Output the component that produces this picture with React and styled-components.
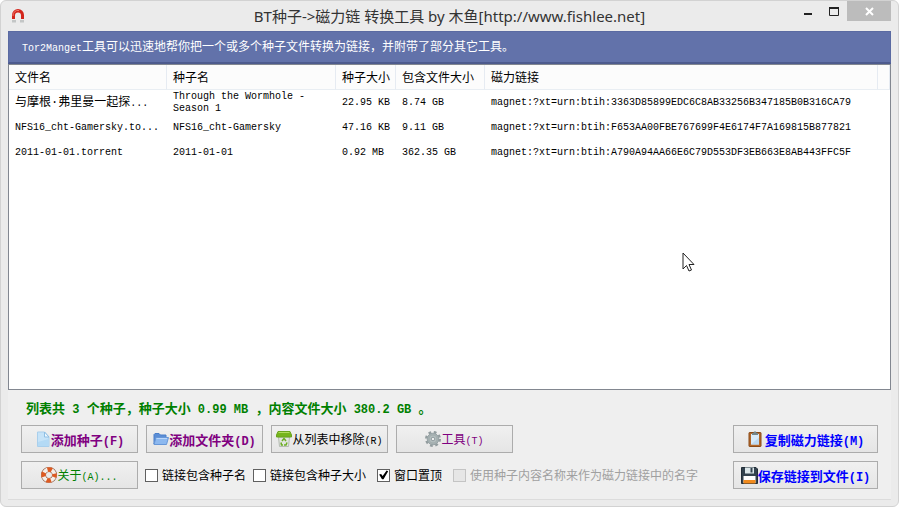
import styled, { createGlobalStyle, css } from 'styled-components';

const GlobalStyle = createGlobalStyle`
  *, *::before, *::after {
    box-sizing: border-box;
  }

  body {
    margin: 0;
    background: #fff;
    font-family: 'Liberation Mono', 'Noto Sans CJK SC', monospace;
    font-size: 12px;
    line-height: 12px;
    color: #000;
  }
`;

const Window = styled.div`
  position: relative;
  display: flex;
  flex-direction: column;
  min-height: 100vh;
  padding: 0 7px 6px;
  border: 1px solid #d2d2d2;
  border-radius: 6px;
  background: #ebebeb;
`;

const TitleBar = styled.header`
  display: grid;
  grid-template-columns: 1fr auto 1fr;
  height: 30px;
`;

const TitleIcon = styled.div`
  padding: 7px 3px;
`;

const Title = styled.h1`
  margin: 0;
  font: 400 15px/30px 'Noto Sans', 'Noto Sans CJK SC', sans-serif;
  color: #333;
  white-space: nowrap;
`;

const WindowControls = styled.div`
  display: flex;
  justify-content: flex-end;
  align-items: flex-start;
`;

const ControlButton = styled.button`
  display: block;
  width: ${({ $close }) => ($close ? 44 : 26)}px;
  height: 20px;
  padding: 0;
  border: 0;
  background: ${({ $close }) => ($close ? '#bcbcbc' : 'transparent')};

  svg {
    display: block;
    margin: 0 auto;
  }
`;

const Client = styled.main`
  flex: 1;
  display: flex;
  flex-direction: column;
  border-bottom: 1px solid #dcdcdc;
  background: #efefef;
`;

const Banner = styled.p`
  margin: 0;
  padding: 0 13px;
  height: 33px;
  border: 1px solid #5a6aa2;
  border-bottom: 2px solid #4d5b8e;
  background: #6272aa;
  color: #fff;
  line-height: 32px;
`;

const Latin = styled.span`
  font-size: ${({ $size = 10 }) => $size}px;
  white-space: pre;
`;

const ListView = styled.div`
  position: relative;
  flex: 1;
  min-height: 160px;
  border: 1px solid #828790;
  background: #fff;
`;

const Table = styled.table`
  width: 100%;
  table-layout: fixed;
  border-collapse: separate;
  border-spacing: 0;
`;

const HeadCell = styled.th`
  width: ${({ $width }) => ($width ? `${$width}px` : 'auto')};
  height: 25px;
  padding: 4px 0 0 6px;
  border-right: 1px solid #e6ebf2;
  border-bottom: 1px solid #e9eef3;
  background: #fcfcfc;
  font-weight: 400;
  text-align: left;
  white-space: nowrap;
`;

const Cell = styled.td`
  height: 25px;
  padding: ${({ $cjk }) => ($cjk ? 2 : 0)}px 0 0 6px;
  white-space: nowrap;
  overflow: hidden;
  font-size: ${({ $cjk }) => ($cjk ? 12 : 10)}px;
  ${({ $wrap }) =>
    $wrap &&
    css`
      padding-right: 20px;
      white-space: normal;
    `}
`;

const Pointer = styled.svg`
  position: absolute;
  left: 673px;
  top: 187px;
`;

const Footer = styled.footer`
  padding: 12px 13px 10px;
`;

const Summary = styled.p`
  margin: 0 0 7px 5px;
  font-size: 13px;
  font-weight: 700;
  line-height: 15px;
  color: #008000;
`;

const Row = styled.div`
  display: flex;
  align-items: center;
  gap: ${({ $gap }) => $gap}px;

  & + & {
    margin-top: 8px;
  }
`;

const Button = styled.button`
  display: flex;
  align-items: center;
  justify-content: center;
  flex: none;
  gap: ${({ $gap = 0 }) => $gap}px;
  width: ${({ $wide }) => ($wide ? 145 : 117)}px;
  height: 28px;
  padding: 0;
  border: 1px solid #acacac;
  background: linear-gradient(#f0f0f0, #e5e5e5);
  color: ${({ $color }) => $color};
  font-family: inherit;
  font-size: ${({ $bold }) => ($bold ? 13 : 12)}px;
  font-weight: ${({ $bold }) => ($bold ? 700 : 400)};
  white-space: nowrap;

  svg {
    flex: none;
  }

  &:last-child {
    margin-left: ${({ $wide }) => ($wide ? 'auto' : 0)};
  }
`;

const Option = styled.label`
  display: flex;
  align-items: center;
  gap: 4px;
  white-space: nowrap;
  color: ${({ $disabled }) => ($disabled ? '#a0a0a0' : '#000')};
  margin-left: ${({ $spaced }) => ($spaced ? 4 : 0)}px;
`;

const OptionText = styled.span`
  padding-top: 4px;
`;

const Check = styled.input`
  appearance: none;
  width: 13px;
  height: 13px;
  margin: 0;
  border: 1px solid #606060;
  background: #fff;

  &:checked::after {
    content: '';
    display: block;
    width: 11px;
    height: 11px;
    background: #000;
    clip-path: polygon(10% 45%, 28% 40%, 42% 60%, 78% 10%, 92% 16%, 50% 88%, 36% 88%);
  }

  &:disabled {
    border-color: #c4c4c4;
    background: #e6e6e6;
  }
`;

const MagnetIcon = () => (
  <svg width="14" height="18" viewBox="0 0 14 18">
    <path d="M1 11V7a6 6 0 0 1 12 0v4H10V7.500a3 3 0 0 0-6 0V11z" fill="#d3261c" />
    <path d="M2 8a5 5 0 0 1 6-5.500" stroke="#f0766c" fill="none" />
    <path d="M1 12h4v2.500H1zM9 12h4v2.500H9z" fill="#c3c6c6" />
  </svg>
);

const FileIcon = () => (
  <svg width="16" height="16" viewBox="0 0 16 16">
    <path d="M2.500 1h7l4.500 5v9.500H2.500z" fill="#c6e3f8" stroke="#a9cfec" />
    <path d="M9.500 1v5H14z" fill="#eef8ff" stroke="#8fbfe4" />
    <path d="M3 11l10.500-3v7H3z" fill="#b4daf5" />
  </svg>
);

const FolderIcon = () => (
  <svg width="16" height="16" viewBox="0 0 16 16">
    <path d="M1 13V3.500L2 2.500h4l1.500 1.500H13v3H4z" fill="#5b8ed6" stroke="#4a7fc9" />
    <path d="M1 13.500L3 6.500h12.500l-2 7z" fill="#8cb8ef" stroke="#6797d8" />
    <path d="M3.500 7.500H14" stroke="#b9d6fa" />
  </svg>
);

const TrashIcon = () => (
  <svg width="16" height="16" viewBox="0 0 16 16">
    <path d="M2.500 6h11l-1 9.500h-9z" fill="#e2e5e0" stroke="#b4bbb1" />
    <path d="M2 0.500h12l1.500 3.500v2H0.500V4z" fill="#76b51b" stroke="#6aa31f" />
    <path d="M2.500 1.500h11" stroke="#b2dd5e" />
    <path d="M6 10l2-2.500 2 2.500M11 11.500l-1 2.500H8M7 14H5.500L5 11.500" fill="none" stroke="#6cae24" strokeWidth="1.500" />
  </svg>
);

const GearIcon = () => (
  <svg width="16" height="16" viewBox="0 0 16 16">
    <circle cx="8" cy="8" r="6.500" fill="none" stroke="#929c9e" strokeWidth="3" strokeDasharray="2.600 2.505" />
    <circle cx="8" cy="8" r="5.800" fill="#a5b0b1" stroke="#97a3a6" />
    <circle cx="8" cy="8" r="3.200" fill="#b6c0c1" />
    <circle cx="8" cy="8" r="1.800" fill="#eceeee" stroke="#8f9b9e" />
  </svg>
);

const LifebuoyIcon = () => (
  <svg width="16" height="16" viewBox="0 0 16 16">
    <circle cx="8" cy="8" r="5.500" fill="none" stroke="#8f5a40" strokeWidth="5" />
    <circle cx="8" cy="8" r="5.500" fill="none" stroke="#f4efea" strokeWidth="3.800" />
    <circle
      cx="8"
      cy="8"
      r="5.500"
      fill="none"
      stroke="#dd5a22"
      strokeWidth="4.600"
      strokeDasharray="4.400 4.239"
      strokeDashoffset="2.200"
    />
  </svg>
);

const ClipboardIcon = () => (
  <svg width="16" height="16" viewBox="0 0 16 16">
    <rect x="2" y="1.500" width="12" height="14" rx="0.500" fill="#b4692a" stroke="#8a4a18" />
    <rect x="4" y="3" width="8" height="10.500" fill="#d8ebfa" />
    <path d="M5 4V2h1.500L7 0.500h2L9.500 2H11v2z" fill="#75868a" />
    <path d="M4 13.500l8-7v7z" fill="#bddaf2" />
  </svg>
);

const FloppyIcon = () => (
  <svg width="17" height="17" viewBox="0 0 17 17">
    <path d="M0.500 0.500H15L16.500 2v14.500h-16z" fill="#33424e" stroke="#222e38" />
    <rect x="4" y="0.500" width="9" height="6" fill="#dce7ea" />
    <rect x="9.500" y="1" width="2" height="4.500" fill="#33424e" />
    <rect x="2.500" y="9" width="12" height="7" fill="#fff" />
    <rect x="2.500" y="13" width="12" height="3.500" fill="#f18a1c" />
  </svg>
);

const torrents = [
  {
    file: '与摩根·弗里曼一起探',
    tail: '...',
    name: 'Through the Wormhole - Season 1',
    size: '22.95 KB',
    total: '8.74 GB',
    hash: '3363D85899EDC6C8AB33256B347185B0B316CA79',
  },
  {
    file: 'NFS16_cht-Gamersky.to...',
    name: 'NFS16_cht-Gamersky',
    size: '47.16 KB',
    total: '9.11 GB',
    hash: 'F653AA00FBE767699F4E6174F7A169815B877821',
  },
  {
    file: '2011-01-01.torrent',
    name: '2011-01-01',
    size: '0.92 MB',
    total: '362.35 GB',
    hash: 'A790A94AA66E6C79D553DF3EB663E8AB443FFC5F',
  },
];

const App = () => {
  return (
    <>
      <GlobalStyle />
      <Window>
        <TitleBar>
          <TitleIcon>
            <MagnetIcon />
          </TitleIcon>
          <Title>BT种子-&gt;磁力链 转换工具 by 木鱼[http://www.fishlee.net]</Title>
          <WindowControls>
            <ControlButton aria-label="最小化">
              <svg width="9" height="20">
                <path d="M0 13h8" stroke="#222" strokeWidth="2" />
              </svg>
            </ControlButton>
            <ControlButton aria-label="最大化">
              <svg width="11" height="20">
                <path d="M0.500 7v7.500h9V7M0 7h10" fill="none" stroke="#222" />
                <path d="M0 7h10" stroke="#222" strokeWidth="2" />
              </svg>
            </ControlButton>
            <ControlButton $close aria-label="关闭">
              <svg width="9" height="20">
                <path d="M1 7l7 7M8 7l-7 7" stroke="#fff" strokeWidth="2" />
              </svg>
            </ControlButton>
          </WindowControls>
        </TitleBar>

        <Client>
          <Banner>
            <Latin>Tor2Manget</Latin>
            工具可以迅速地帮你把一个或多个种子文件转换为链接，并附带了部分其它工具。
          </Banner>

          <ListView>
            <Table>
              <thead>
                <tr>
                  <HeadCell $width={158}>文件名</HeadCell>
                  <HeadCell $width={169}>种子名</HeadCell>
                  <HeadCell $width={60}>种子大小</HeadCell>
                  <HeadCell $width={89}>包含文件大小</HeadCell>
                  <HeadCell>磁力链接</HeadCell>
                  <HeadCell as="td" $width={12} />
                </tr>
              </thead>
              <tbody>
                {torrents.map(({ file, tail, name, size, total, hash }) => (
                  <tr key={hash}>
                    <Cell $cjk={!!tail}>
                      {file}
                      {tail && <Latin>{tail}</Latin>}
                    </Cell>
                    <Cell $wrap>{name}</Cell>
                    <Cell>{size}</Cell>
                    <Cell>{total}</Cell>
                    <Cell>magnet:?xt=urn:btih:{hash}</Cell>
                  </tr>
                ))}
              </tbody>
            </Table>
            <Pointer width="13" height="20" viewBox="0 0 13 20">
              <path d="M1 1v16l3.500-3.500L7 19l2.500-1-2.500-5.500H12z" fill="#fff" stroke="#222" />
            </Pointer>
          </ListView>

          <Footer>
            <Summary>
              列表共<Latin $size={12}> 3 </Latin>个种子，种子大小<Latin $size={12}> 0.99 MB </Latin>
              ，内容文件大小<Latin $size={12}> 380.2 GB </Latin>。
            </Summary>
            <Row $gap={8}>
              <Button $bold $color="#800080">
                <FileIcon />
                <span>添加种子<Latin $size={12}>(F)</Latin></span>
              </Button>
              <Button $bold $color="#800080">
                <FolderIcon />
                <span>添加文件夹<Latin $size={12}>(D)</Latin></span>
              </Button>
              <Button $color="#000">
                <TrashIcon />
                <span>从列表中移除<Latin>(R)</Latin></span>
              </Button>
              <Button $color="#800080">
                <GearIcon />
                <span>工具<Latin>(T)</Latin></span>
              </Button>
              <Button $bold $wide $gap={2} $color="#0000ff">
                <ClipboardIcon />
                <span>复制磁力链接<Latin $size={12}>(M)</Latin></span>
              </Button>
            </Row>
            <Row $gap={7}>
              <Button $color="#008000">
                <LifebuoyIcon />
                <span>关于<Latin>(A)...</Latin></span>
              </Button>
              <Option>
                <Check type="checkbox" />
                <OptionText>链接包含种子名</OptionText>
              </Option>
              <Option>
                <Check type="checkbox" />
                <OptionText>链接包含种子大小</OptionText>
              </Option>
              <Option $spaced>
                <Check type="checkbox" defaultChecked />
                <OptionText>窗口置顶</OptionText>
              </Option>
              <Option $spaced $disabled>
                <Check type="checkbox" disabled />
                <OptionText>使用种子内容名称来作为磁力链接中的名字</OptionText>
              </Option>
              <Button $bold $wide $color="#0000ff">
                <FloppyIcon />
                <span>保存链接到文件<Latin $size={12}>(I)</Latin></span>
              </Button>
            </Row>
          </Footer>
        </Client>
      </Window>
    </>
  );
};

export default App;
